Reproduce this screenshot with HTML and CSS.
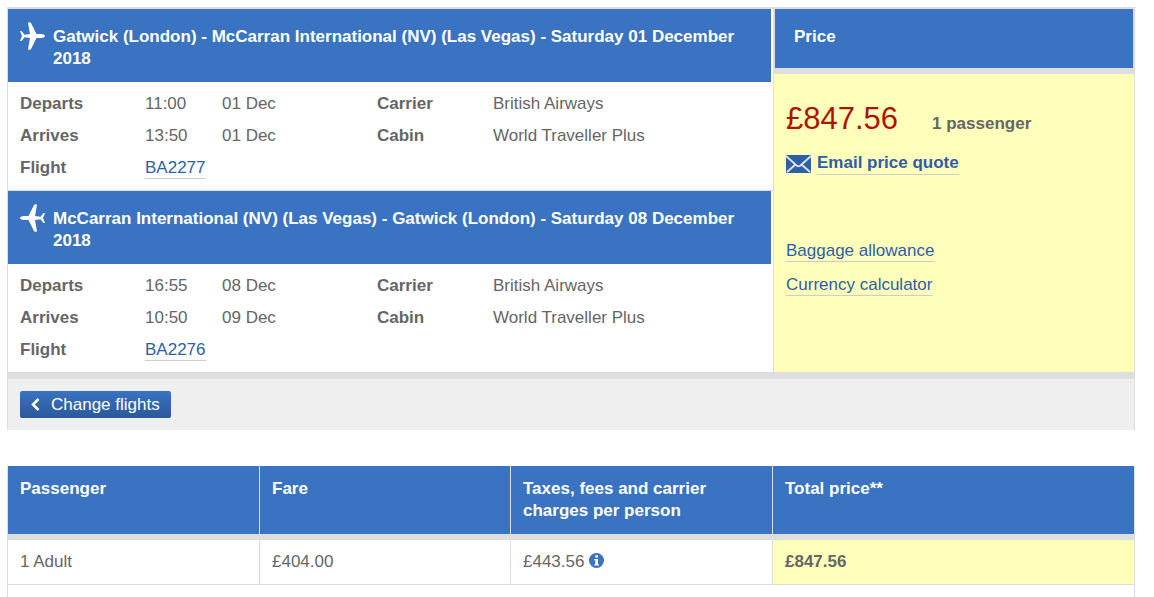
FILE: index.html
```html
<!doctype html>
<html lang="en">
<head>
<meta charset="UTF-8">
<title>Flight price quote</title>
<meta name="viewport" content="width=device-width, initial-scale=1.0">
<link rel="stylesheet" href="styles.css">
</head>
<body>
<main>
<section class="quote">
  <div class="flights">
    <article>
      <h2 class="flight-head">
        <svg class="plane" viewBox="0 0 25 28" aria-hidden="true"><path d="M25 14c0-1.300-2-2-4-2h-4.500L11 1C10.500 0 8.300-.2 8 .8L10 12 4.500 12.700 1.500 9H0L2 14 0 19h1.500L4.500 15.300 10 16 8 27.200c.3 1 2.500.8 3-.2L16.500 16H21c2 0 4-.7 4-2z"/></svg>
        <span>Gatwick (London) - McCarran International (NV) (Las Vegas) - Saturday 01 December 2018</span>
      </h2>
      <table class="details">
        <tr><th class="label">Departs</th><td class="time">11:00</td><td class="date">01 Dec</td><th class="info">Carrier</th><td>British Airways</td></tr>
        <tr><th>Arrives</th><td>13:50</td><td>01 Dec</td><th>Cabin</th><td>World Traveller Plus</td></tr>
        <tr><th>Flight</th><td colspan="4"><a href="#">BA2277</a></td></tr>
      </table>
    </article>
    <article>
      <h2 class="flight-head">
        <svg class="plane back" viewBox="0 0 25 28" aria-hidden="true"><path d="M25 14c0-1.300-2-2-4-2h-4.500L11 1C10.500 0 8.300-.2 8 .8L10 12 4.500 12.700 1.500 9H0L2 14 0 19h1.500L4.500 15.300 10 16 8 27.200c.3 1 2.500.8 3-.2L16.500 16H21c2 0 4-.7 4-2z"/></svg>
        <span>McCarran International (NV) (Las Vegas) - Gatwick (London) - Saturday 08 December 2018</span>
      </h2>
      <table class="details">
        <tr><th class="label">Departs</th><td class="time">16:55</td><td class="date">08 Dec</td><th class="info">Carrier</th><td>British Airways</td></tr>
        <tr><th>Arrives</th><td>10:50</td><td>09 Dec</td><th>Cabin</th><td>World Traveller Plus</td></tr>
        <tr><th>Flight</th><td colspan="4"><a href="#">BA2276</a></td></tr>
      </table>
    </article>
  </div>
  <aside class="price">
    <h2>Price</h2>
    <div class="price-body">
      <p class="total"><span class="amount">£847.56</span><strong>1 passenger</strong></p>
      <p class="email">
        <svg class="envelope" viewBox="0 0 25 18" aria-hidden="true"><rect width="25" height="18" rx="1" fill="#2e5fa6"/><path d="M0 1l10.500 9.500q2 1.500 4 0L25 1M1 17l8.500-7.500M24 17l-8.500-7.500" fill="none" stroke="#d5e4ef" stroke-width="2"/></svg>
        <a href="#">Email price quote</a>
      </p>
      <ul>
        <li><a href="#">Baggage allowance</a></li>
        <li><a href="#">Currency calculator</a></li>
      </ul>
    </div>
  </aside>
  <div class="actions">
    <button type="button"><svg class="chevron" viewBox="0 0 9 13" aria-hidden="true"><path d="M7.500 1L2 6.500l5.500 5.500"/></svg>Change flights</button>
  </div>
</section>

<table class="fares">
  <thead>
    <tr><th class="passenger">Passenger</th><th class="fare">Fare</th><th class="taxes">Taxes, fees and carrier charges per person</th><th>Total price**</th></tr>
  </thead>
  <tbody>
    <tr><td>1 Adult</td><td>£404.00</td><td>£443.56 <svg class="about" viewBox="0 0 15 15" role="img" aria-label="More about taxes"><circle cx="7.500" cy="7.500" r="7.500" fill="#3973c1"/><path d="M6.300 2.300H9v2.200H6.300zM5.300 6H9v5.200h1v1.300H5.300v-1.300h1V7.300h-1z" fill="#fff"/></svg></td><td class="sum">£847.56</td></tr>
  </tbody>
  <tfoot>
    <tr><td colspan="4"></td></tr>
  </tfoot>
</table>
</main>
</body>
</html>
```
FILE: styles.css
```css
body {
  margin: 0;
  background: #fff;
  color: #666;
  font: 17px/22px "Liberation Sans", Arial, sans-serif;
}
main {
  padding: 7px 19px 0 7px;
}
h2, p, ul {
  margin: 0;
  padding: 0;
  font-size: 17px;
}
table {
  width: 100%;
  border-collapse: separate;
  border-spacing: 0;
  table-layout: fixed;
}
th, td {
  padding: 0;
  text-align: left;
  vertical-align: top;
}
a {
  color: #2e5fa6;
  text-decoration: none;
  border-bottom: 1px solid #ccc;
  padding-bottom: 1px;
}

.quote {
  display: grid;
  grid-template-columns: 765fr 361fr;
  border: 1px solid #dedede;
  border-width: 2px 1px 0;
}
.flight-head {
  display: flex;
  align-items: flex-start;
  gap: 8px;
  margin-right: 2px;
  padding: 13px 12px 12px;
  background: #3973c1;
  color: #fff;
}
.flight-head span {
  flex: 1;
  padding-top: 4px;
}
.plane {
  width: 25px;
  height: 28px;
  fill: #fff;
}
.back {
  transform: scaleX(-1);
}
article + article {
  border-top: 1px solid #dedede;
}
.details {
  padding: 6px 12px;
}
.details th, .details td {
  padding: 5px 0;
}
.details .label {
  width: 125px;
}
.details .time {
  width: 77px;
}
.details .date {
  width: 155px;
}
.details .info {
  width: 116px;
}

.price {
  background: #ffffbc;
  border-left: 1px solid #dedede;
}
.price h2 {
  padding: 17px 19px 20px;
  background: #3973c1;
  border: 1px solid #dedede;
  border-width: 0 1px;
  color: #fff;
}
.price-body {
  border-top: 6px solid #dedede;
  padding: 27px 12px 0;
}
.total {
  display: flex;
  align-items: baseline;
  gap: 34px;
  line-height: 36px;
}
.amount {
  color: #b01200;
  font-size: 31px;
}
.email {
  display: flex;
  align-items: center;
  gap: 6px;
  margin: 10px 0 65px;
  font-weight: bold;
}
.email a {
  padding: 0;
}
.envelope {
  width: 25px;
  height: 18px;
}
.price ul {
  list-style: none;
}
.price li {
  margin-bottom: 12px;
}

.actions {
  grid-column: 1 / -1;
  padding: 12px;
  background: #efefef;
  border-top: 7px solid #dedede;
}
button {
  display: flex;
  align-items: center;
  height: 27px;
  padding: 0 11px;
  border: 0;
  border-radius: 2px;
  background: linear-gradient(#3973c1, #2b589b);
  color: #fff;
  font: inherit;
}
.chevron {
  width: 9px;
  height: 13px;
  margin-right: 11px;
  fill: none;
  stroke: #fff;
  stroke-width: 2.5;
}

.fares {
  margin-top: 36px;
  border: 1px solid #dedede;
  border-width: 0 1px;
}
.fares th {
  padding: 12px;
  background: #3973c1;
  border-right: 1px solid #dedede;
  border-bottom: 6px solid #dedede;
  color: #fff;
}
.fares td {
  height: 22px;
  padding: 11px 12px;
  border-right: 1px solid #dedede;
}
.fares tbody td {
  border-bottom: 1px solid #dedede;
}
.fares th:last-child, .fares td:last-child {
  border-right: 0;
}
.fares tfoot td {
  height: 12px;
  padding: 0;
}
.fares .passenger {
  width: 227px;
}
.fares .fare {
  width: 226px;
}
.fares .taxes {
  width: 237px;
}
.fares .sum {
  background: #ffffbc;
  font-weight: bold;
}
.about {
  width: 15px;
  height: 15px;
  vertical-align: -1px;
}
```
